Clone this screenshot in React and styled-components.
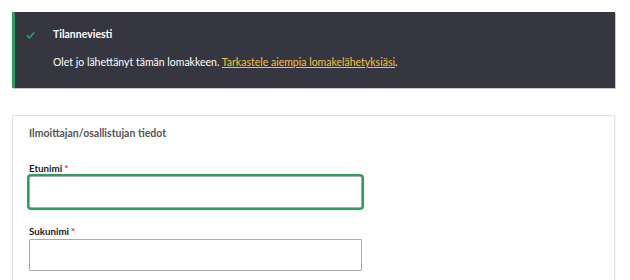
import React from "react"
import styled, { createGlobalStyle } from "styled-components"

const GlobalStyle = createGlobalStyle`
  body {
    margin: 0;
    background: #fff;
    font-family: Lato, "Open Sans", sans-serif;
  }
`

const Page = styled.div`
  padding: 12px 15px 0 12px;
  display: flex;
  flex-direction: column;
  gap: 27px;
`

const Notice = styled.div`
  background: #363640;
  border-left: 3px solid #2e9e5e;
  box-shadow: 1px 1px 0 #c8c8cc;
  height: 76px;
  box-sizing: border-box;
  display: flex;
  padding: 15px 20px 0 11px;
  gap: 18px;
`

const Check = styled.svg`
  width: 9px;
  height: 8px;
  margin-top: 4px;
  flex-shrink: 0;
`

const NoticeBody = styled.div`
  display: flex;
  flex-direction: column;
  gap: 12px;
`

const NoticeTitle = styled.div`
  color: #fff;
  font-weight: 700;
  font-size: 10.5px;
  line-height: 15px;
`

const NoticeText = styled.div`
  color: #fff;
  font-size: 10.5px;
  line-height: 16px;

  a {
    color: #f2c234;
    text-decoration: underline;
  }
`

const Card = styled.div`
  border: 1px solid #e4e4e4;
  box-shadow: 1px 1px 1px rgba(0, 0, 0, 0.04);
  padding: 10px 16px 40px 16px;
  display: flex;
  flex-direction: column;
`

const CardTitle = styled.div`
  color: #555;
  font-weight: 700;
  font-size: 10.5px;
  line-height: 15px;
  margin-bottom: 21px;
`

const Field = styled.div`
  display: flex;
  flex-direction: column;
  width: 333px;
  margin-bottom: ${p => p.$last ? 0 : "17px"};
`

const Label = styled.label`
  color: #222;
  font-weight: 700;
  font-size: 9.75px;
  line-height: 12px;
  margin-bottom: 2px;

  span {
    color: #d9303c;
    margin-left: 2px;
  }
`

const Input = styled.div`
  height: 32px;
  box-sizing: border-box;
  border: 1px solid #a9a9a9;
  background: #fff;
  border-radius: 1px;
  ${p => p.$focused && `
    box-shadow: 0 0 0 2px #2e9e5e;
    border-radius: 2px;
  `}
`

export default function App() {
  return (
    <>
      <GlobalStyle />
      <Page>
        <Notice>
          <Check viewBox="0 0 9 8">
            <path d="M0.8 4.4 L3.4 6.8 L8.3 1.2" stroke="#2e9e5e" strokeWidth="1.6" fill="none" />
          </Check>
          <NoticeBody>
            <NoticeTitle>Tilanneviesti</NoticeTitle>
            <NoticeText>
              Olet jo lähettänyt tämän lomakkeen. <a href="#">Tarkastele aiempia lomakelähetyksiäsi</a>.
            </NoticeText>
          </NoticeBody>
        </Notice>
        <Card>
          <CardTitle>Ilmoittajan/osallistujan tiedot</CardTitle>
          <Field>
            <Label>Etunimi<span>*</span></Label>
            <Input $focused />
          </Field>
          <Field $last>
            <Label>Sukunimi<span>*</span></Label>
            <Input />
          </Field>
        </Card>
      </Page>
    </>
  )
}
